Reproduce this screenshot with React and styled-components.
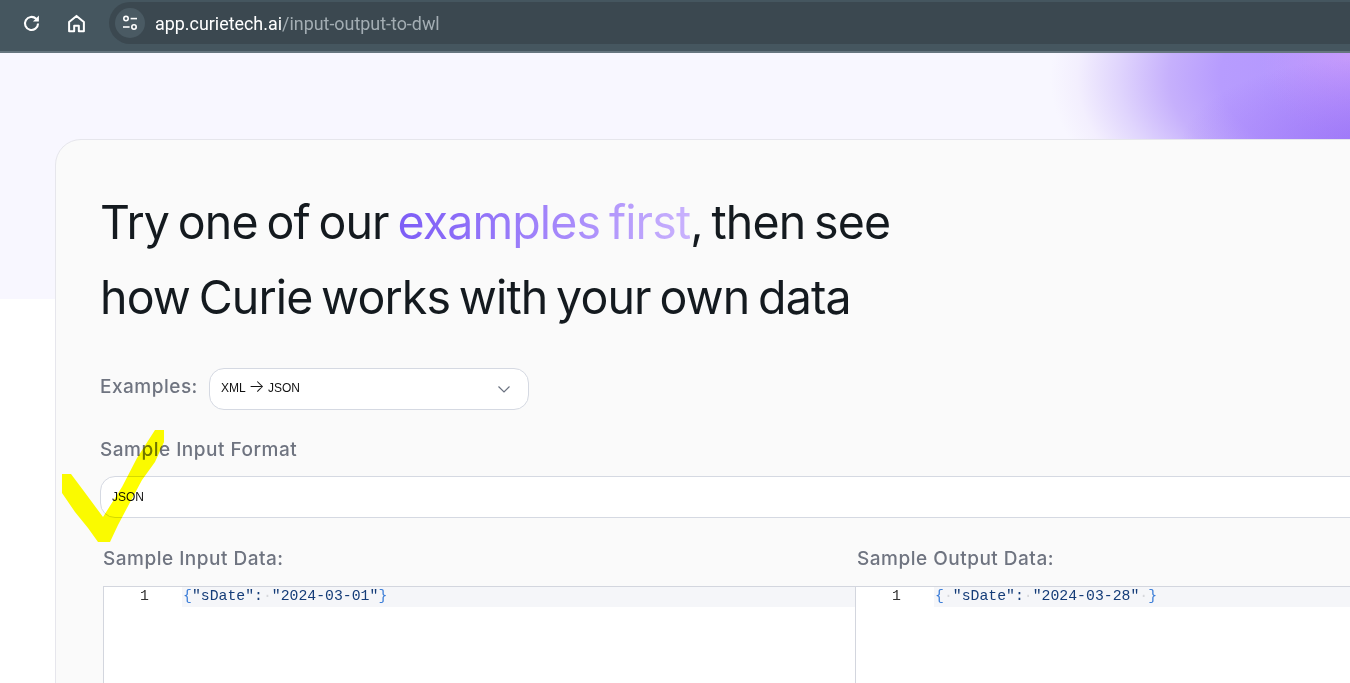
import React from "react";
import styled, { createGlobalStyle } from "styled-components";

const GlobalStyle = createGlobalStyle`
  html, body {
    margin: 0;
    height: 100%;
    overflow: hidden;
    background: #fff;
    font-family: "Inter", "Liberation Sans", sans-serif;
  }
`;

const Shell = styled.div`
  display: flex;
  flex-direction: column;
  height: 683px;
  overflow: hidden;
  position: relative;
  width: 1350px;
`;

const BrowserBar = styled.header`
  align-items: flex-start;
  background: #45565f;
  border-bottom: 2px solid #66767f;
  box-sizing: border-box;
  display: flex;
  flex: none;
  height: 53px;
  padding: 2px 0 0 21px;
`;

const NavButton = styled.span`
  align-items: center;
  color: #fff;
  display: flex;
  height: 42px;
  justify-content: center;
  margin-right: ${({ $gap }) => $gap}px;
  width: 20px;
`;

const Omnibox = styled.div`
  align-items: center;
  background: #3b4850;
  border-radius: 21px 0 0 21px;
  display: flex;
  flex: 1;
  height: 42px;
  padding-left: 6px;
`;

const SiteChip = styled.span`
  align-items: center;
  background: #4a5a63;
  border-radius: 50%;
  color: #fff;
  display: flex;
  height: 30px;
  justify-content: center;
  margin-right: 10px;
  width: 30px;
`;

const Url = styled.span`
  color: #fff;
  font-family: "Roboto", "Liberation Sans", sans-serif;
  font-size: 17.9px;
`;

const UrlPath = styled.span`
  color: #a3adb3;
`;

const Backdrop = styled.div`
  background:
    radial-gradient(ellipse 190px 90px at 1370px 95px, rgba(150, 108, 246, 0.8) 0%, rgba(150, 108, 246, 0) 100%),
    radial-gradient(circle 90px at 1350px 0, rgba(200, 155, 251, 0.9) 0%, rgba(200, 155, 251, 0) 100%),
    radial-gradient(ellipse 340px 185px at 1390px 25px, #b092ff 0%, #b79cfe 50%, #c6b0fc 65%, #e0d5fd 80%, #f3effe 92%, rgba(248, 247, 255, 0) 100%),
    #f8f7ff;
  height: 246px;
  left: 0;
  position: absolute;
  right: 0;
  top: 53px;
`;

const Page = styled.main`
  flex: 1;
  padding: 86px 0 0 55px;
  position: relative;
`;

const Card = styled.section`
  background: #fafafa;
  border: 1px solid #e6e6ec;
  border-radius: 26px;
  box-sizing: border-box;
  height: 720px;
  padding: 45px 0 0 44px;
  position: relative;
  width: 1500px;
`;

const Title = styled.h1`
  color: #141a1f;
  font-size: 46.5px;
  font-weight: 400;
  letter-spacing: -0.87px;
  line-height: 75px;
  margin: 0 0 33px;
  width: 850px;
  word-spacing: -3.5px;
`;

const Accent = styled.span`
  background: linear-gradient(90deg, #7c5cf6 0%, #a88bfb 60%, #c9b2fd 100%);
  -webkit-background-clip: text;
  background-clip: text;
  color: transparent;
`;

const ExampleRow = styled.div`
  align-items: center;
  display: flex;
  gap: 11px;
  margin-bottom: 28px;
`;

const FieldLabel = styled.label`
  color: #6f7480;
  display: block;
  font-size: 19px;
  font-weight: 500;
  letter-spacing: 0.5px;
`;

const ExampleLabel = styled(FieldLabel)`
  margin-bottom: 5px;
`;

const SelectBox = styled.div`
  align-items: center;
  background: #fff;
  border: 1px solid #d5d9e2;
  border-radius: 15px;
  box-sizing: border-box;
  color: #111;
  display: flex;
  font-family: "Liberation Sans", sans-serif;
  font-size: 12px;
  height: 42px;
  justify-content: space-between;
  padding: 0 17px 0 11px;
  width: ${({ $width }) => $width};
`;

const ArrowGlyph = styled.span`
  font-family: "Inter", sans-serif;
  font-size: 17px;
  font-weight: 300;
  line-height: 0;
`;

const SelectValue = styled.span`
  line-height: 14px;
  margin-top: -2px;
`;

const Chevron = styled.span`
  color: #6b7280;
  display: flex;
`;

const FormatLabel = styled(FieldLabel)`
  margin-bottom: 15px;
`;

const Editors = styled.div`
  display: flex;
  margin: 29px 0 0 3px;
`;

const EditorColumn = styled.div`
  display: flex;
  flex: none;
  flex-direction: column;
  gap: 16px;
  width: ${({ $width }) => $width}px;
`;

const OutputLabel = styled(FieldLabel)`
  margin-left: 2px;
`;

const Editor = styled.div`
  background: #fff;
  border-left: 1px solid #d3d6de;
  border-top: 1px solid #d3d6de;
  box-sizing: border-box;
  display: flex;
  font-family: "Liberation Mono", monospace;
  font-size: 14.8px;
  height: 200px;
`;

const Gutter = styled.div`
  box-sizing: border-box;
  color: #333;
  flex: none;
  line-height: 18px;
  padding-right: 33px;
  text-align: right;
  width: 78px;
`;

const CodeLine = styled.div`
  background: #f5f6f9;
  box-sizing: border-box;
  color: #143c78;
  flex: 1;
  height: 20px;
  line-height: 18px;
  padding-left: 1px;
  white-space: pre;
`;

const Brace = styled.span`
  color: #3b7dd8;
`;

const Space = styled.span`
  color: #d6d8dc;
`;

const Scribble = styled.svg`
  left: 62px;
  mix-blend-mode: multiply;
  pointer-events: none;
  position: absolute;
  top: 430px;
`;

function ReloadIcon() {
  return (
    <svg width="19" height="19" viewBox="0 0 18 18" fill="none" stroke="currentColor" strokeWidth="2">
      <path d="M15.2 9a6.2 6.2 0 1 1-1.8-4.4L15 6.2" />
      <path d="M16 1.4v5.6h-5.6z" fill="currentColor" stroke="none" />
    </svg>
  );
}

function HomeIcon() {
  return (
    <svg width="19" height="19" viewBox="0 0 18 18" fill="none" stroke="currentColor" strokeWidth="1.9" strokeLinejoin="round">
      <path d="M2 7.6 9 1.8l7 5.8V16.4h-4.8v-5.2H6.8v5.2H2z" />
    </svg>
  );
}

function TuneIcon() {
  return (
    <svg width="16" height="16" viewBox="0 0 16 16" fill="none" stroke="currentColor" strokeWidth="1.6">
      <circle cx="4" cy="3.6" r="2.2" />
      <path d="M8.6 3.6H15" />
      <circle cx="12" cy="12" r="2.2" />
      <path d="M1 12h6.6" />
    </svg>
  );
}

function ChevronIcon() {
  return (
    <svg width="14" height="14" viewBox="0 0 14 14" fill="none" stroke="currentColor" strokeWidth="1.2">
      <path d="M1.5 4.5 7 10l5.5-5.5" />
    </svg>
  );
}

export default function App() {
  return (
    <Shell>
      <GlobalStyle />
      <BrowserBar>
        <NavButton $gap={25}>
          <ReloadIcon />
        </NavButton>
        <NavButton $gap={23}>
          <HomeIcon />
        </NavButton>
        <Omnibox>
          <SiteChip>
            <TuneIcon />
          </SiteChip>
          <Url>
            app.curietech.ai<UrlPath>/input-output-to-dwl</UrlPath>
          </Url>
        </Omnibox>
      </BrowserBar>
      <Backdrop />
      <Page>
        <Card>
          <Title>
            Try one of our <Accent>examples first</Accent>, then see how Curie works with your own data
          </Title>
          <ExampleRow>
            <ExampleLabel>Examples:</ExampleLabel>
            <SelectBox $width="320px">
              <SelectValue>
                XML <ArrowGlyph>→</ArrowGlyph> JSON
              </SelectValue>
              <Chevron>
                <ChevronIcon />
              </Chevron>
            </SelectBox>
          </ExampleRow>
          <FormatLabel>Sample Input Format</FormatLabel>
          <SelectBox $width="1400px">JSON</SelectBox>
          <Editors>
            <EditorColumn $width={752}>
              <FieldLabel>Sample Input Data:</FieldLabel>
              <Editor>
                <Gutter>1</Gutter>
                <CodeLine>
                  <Brace>{"{"}</Brace>"sDate":<Space>·</Space>"2024-03-01"<Brace>{"}"}</Brace>
                </CodeLine>
              </Editor>
            </EditorColumn>
            <EditorColumn $width={600}>
              <OutputLabel>Sample Output Data:</OutputLabel>
              <Editor>
                <Gutter>1</Gutter>
                <CodeLine>
                  <Brace>{"{"}</Brace>
                  <Space>·</Space>"sDate":<Space>·</Space>"2024-03-28"<Space>·</Space>
                  <Brace>{"}"}</Brace>
                </CodeLine>
              </Editor>
            </EditorColumn>
          </Editors>
        </Card>
      </Page>
      <Scribble width="104" height="116" viewBox="0 0 104 116">
        <path d="M93 0H102V12L93 32 80 50 65 78 56 95 48 112H36L26 98 13 82 0 63V44H9L21 60 41 87 60 57 75 28Z" fill="#ffff00" />
      </Scribble>
    </Shell>
  );
}
